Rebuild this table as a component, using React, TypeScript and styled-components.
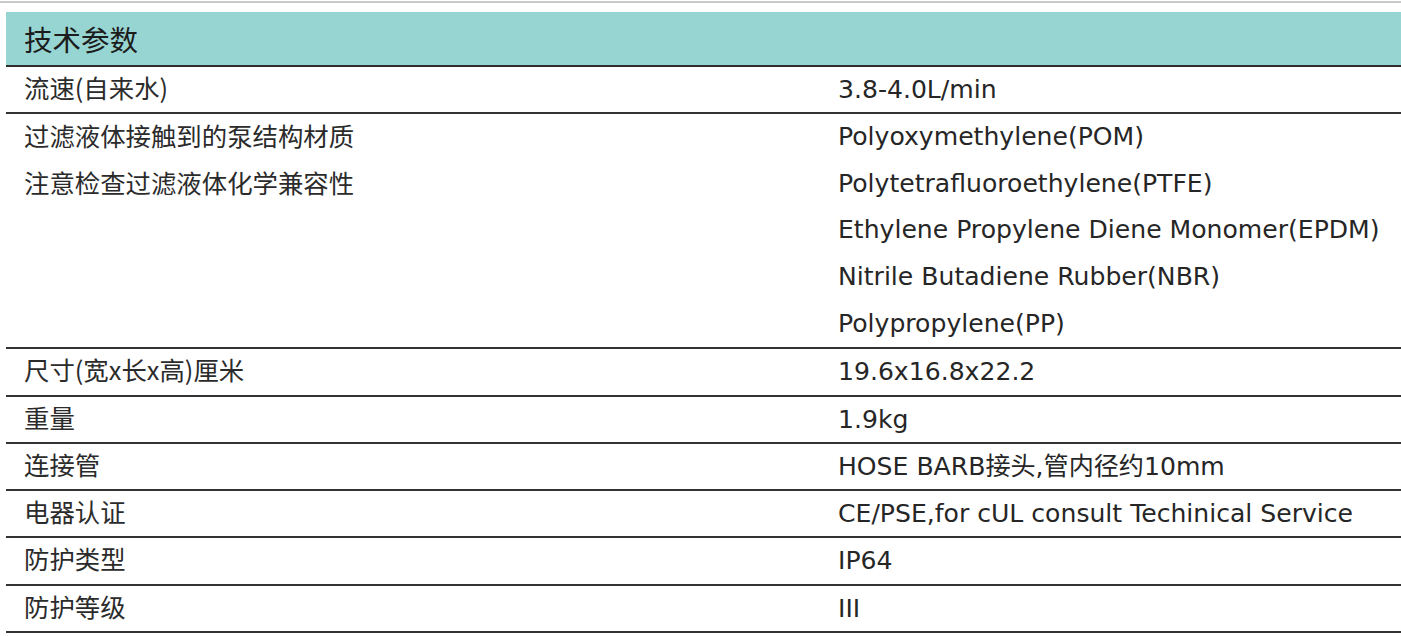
import React from "react";
import styled, { createGlobalStyle } from "styled-components";

const Global = createGlobalStyle`
  html, body { margin: 0; padding: 0; background: #ffffff; }
  body { font-family: "DejaVu Sans", "Noto Sans CJK SC", sans-serif; }
`;

const Page = styled.div`
  width: 1401px;
  border-top: 2px solid #c9c9c9;
  margin-top: 1px;
  padding-top: 9px;
  overflow: hidden;
`;

const Table = styled.div`
  margin-left: 6px;
  display: grid;
  grid-template-columns: 813px 1fr;
`;

const Header = styled.div`
  grid-column: 1 / -1;
  height: 53px;
  background: #97d5d2;
  border-bottom: 2px solid #2e2e2e;
  display: flex;
  align-items: center;
  padding-left: 18px;
  font-family: "Noto Sans CJK SC", sans-serif;
  font-size: 28.5px;
  color: #1c1c1c;
`;

const Row = styled.div`
  grid-column: 1 / -1;
  display: grid;
  grid-template-columns: subgrid;
  border-bottom: 2px solid #333333;
`;

const Label = styled.div`
  padding-left: 18px;
  font-family: "Noto Sans CJK SC", sans-serif;
  font-size: 25.4px;
  color: #2b2b2b;
  display: flex;
  flex-direction: column;
`;

const Value = styled.div`
  padding-left: 19px;
  font-family: "DejaVu Sans", "Noto Sans CJK SC", sans-serif;
  font-size: 25.1px;
  color: #262626;
  display: flex;
  flex-direction: column;
`;

const Line = styled.div<{ $h: number; $lift?: number }>`
  height: ${(p) => p.$h}px;
  line-height: ${(p) => p.$h - (p.$lift ?? 0) * 2}px;
  white-space: nowrap;
`;

type RowData = { label: string[]; value: string[] };

const rows: RowData[] = [
  { label: ["流速(自来水)"], value: ["3.8-4.0L/min"] },
  {
    label: ["过滤液体接触到的泵结构材质", "注意检查过滤液体化学兼容性"],
    value: [
      "Polyoxymethylene(POM)",
      "Polytetrafluoroethylene(PTFE)",
      "Ethylene Propylene Diene Monomer(EPDM)",
      "Nitrile Butadiene Rubber(NBR)",
      "Polypropylene(PP)",
    ],
  },
  { label: ["尺寸(宽x长x高)厘米"], value: ["19.6x16.8x22.2"] },
  { label: ["重量"], value: ["1.9kg"] },
  { label: ["连接管"], value: ["HOSE BARB接头,管内径约10mm"] },
  { label: ["电器认证"], value: ["CE/PSE,for cUL consult Techinical Service"] },
  { label: ["防护类型"], value: ["IP64"] },
  { label: ["防护等级"], value: ["III"] },
];

export default function App() {
  return (
    <>
      <Global />
      <Page>
        <Table>
          <Header>技术参数</Header>
          {rows.map((r, i) => {
            const multi = r.value.length > 1;
            const h = multi ? 46.6 : 45.3;
            return (
              <Row key={i}>
                <Label>
                  {r.label.map((t, j) => (
                    <Line key={j} $h={h} $lift={2}>{t}</Line>
                  ))}
                </Label>
                <Value>
                  {r.value.map((t, j) => (
                    <Line key={j} $h={h}>{t}</Line>
                  ))}
                </Value>
              </Row>
            );
          })}
        </Table>
      </Page>
    </>
  );
}
